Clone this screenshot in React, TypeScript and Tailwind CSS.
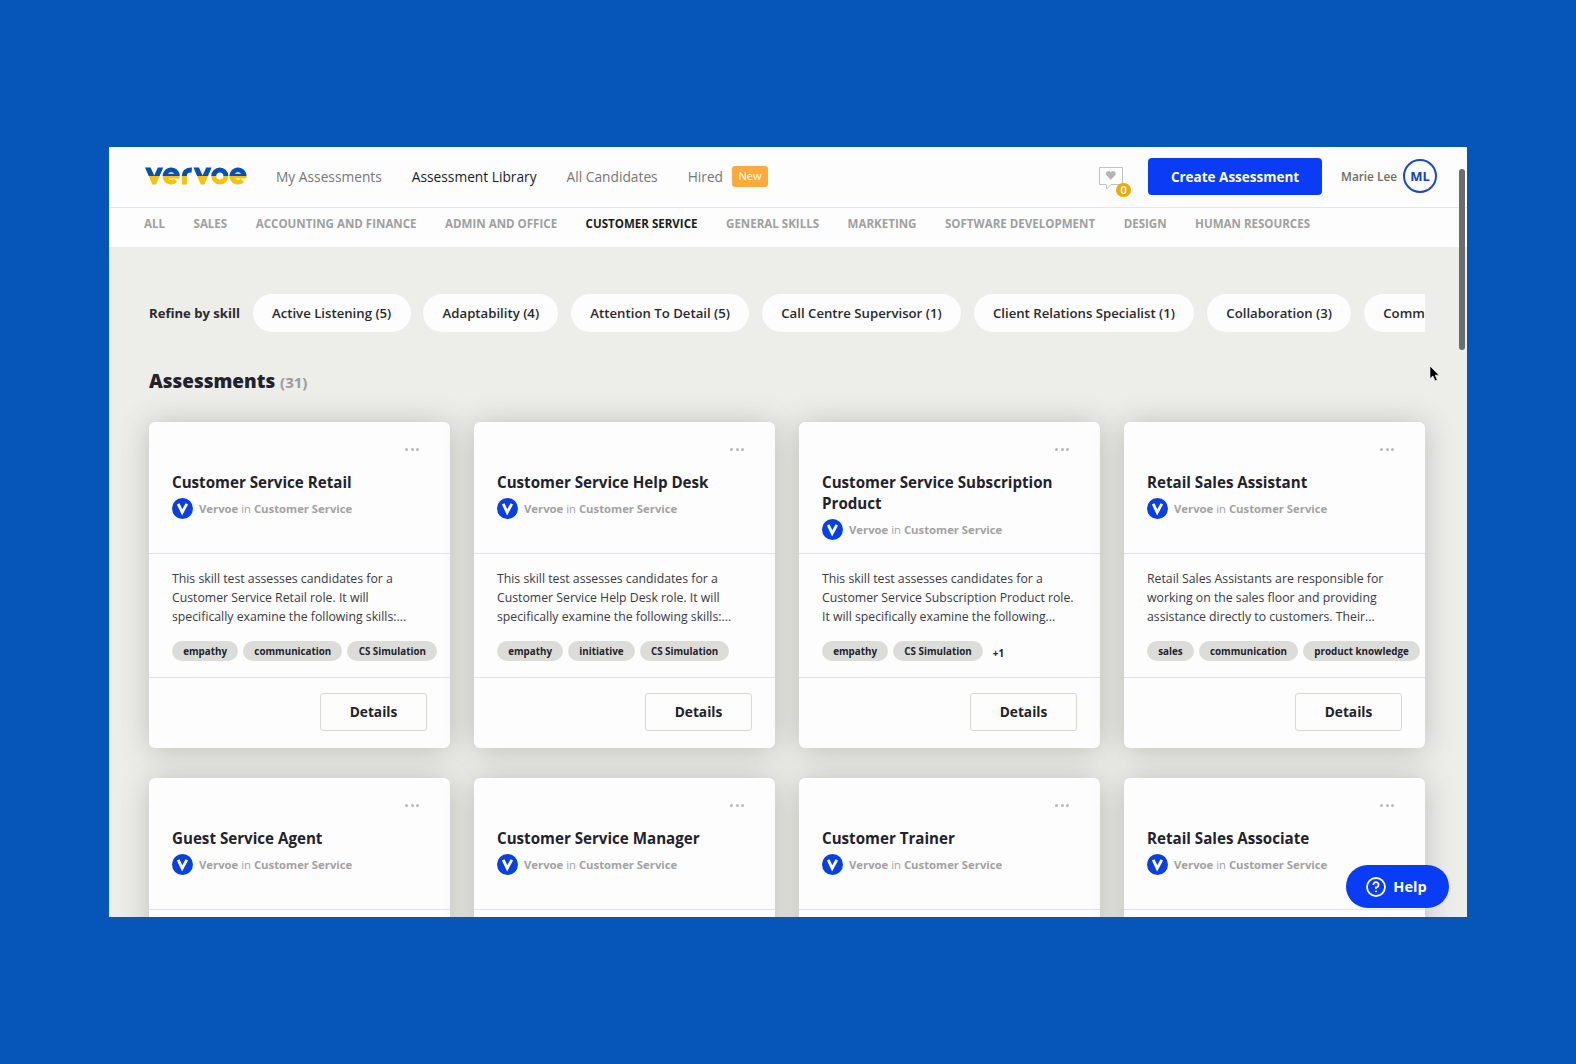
const navItems = ['My Assessments', 'Assessment Library', 'All Candidates', 'Hired'];

const categories = [
  'ALL',
  'SALES',
  'ACCOUNTING AND FINANCE',
  'ADMIN AND OFFICE',
  'CUSTOMER SERVICE',
  'GENERAL SKILLS',
  'MARKETING',
  'SOFTWARE DEVELOPMENT',
  'DESIGN',
  'HUMAN RESOURCES',
];

const skills = [
  'Active Listening (5)',
  'Adaptability (4)',
  'Attention To Detail (5)',
  'Call Centre Supervisor (1)',
  'Client Relations Specialist (1)',
  'Collaboration (3)',
];

interface Assessment {
  title: string;
  lines?: string[];
  tags?: string[];
  extra?: string;
}

const assessments: Assessment[] = [
  {
    title: 'Customer Service Retail',
    lines: ['This skill test assesses candidates for a', 'Customer Service Retail role. It will', 'specifically examine the following skills:...'],
    tags: ['empathy', 'communication', 'CS Simulation'],
  },
  {
    title: 'Customer Service Help Desk',
    lines: ['This skill test assesses candidates for a', 'Customer Service Help Desk role. It will', 'specifically examine the following skills:...'],
    tags: ['empathy', 'initiative', 'CS Simulation'],
  },
  {
    title: 'Customer Service Subscription Product',
    lines: ['This skill test assesses candidates for a', 'Customer Service Subscription Product role.', 'It will specifically examine the following...'],
    tags: ['empathy', 'CS Simulation'],
    extra: '+1',
  },
  {
    title: 'Retail Sales Assistant',
    lines: ['Retail Sales Assistants are responsible for', 'working on the sales floor and providing', 'assistance directly to customers. Their...'],
    tags: ['sales', 'communication', 'product knowledge'],
  },
  { title: 'Guest Service Agent' },
  { title: 'Customer Service Manager' },
  { title: 'Customer Trainer' },
  { title: 'Retail Sales Associate' },
];

function Logo() {
  return (
    <svg className="h-[18px] w-[102px]" viewBox="0 0 102 18" fill="none" strokeWidth="5">
      <defs>
        <linearGradient id="logo" x1="0" y1="0" x2="0" y2="18" gradientUnits="userSpaceOnUse">
          <stop offset="0.5" stopColor="#0a50b4" />
          <stop offset="0.5" stopColor="#f7c20c" />
        </linearGradient>
      </defs>
      <path d="M0 0.5H5.6L9.2 8.6L12.8 0.5H18.2L11 17.5H7.4zM48.4 0.5H54L57.6 8.6L61.2 0.5H66.6L59.4 17.5H55.8z" fill="url(#logo)" />
      <g stroke="url(#logo)">
        <path d="M20.5 9.2H32.4A6.2 6.2 0 1 0 30.6 13.4" strokeWidth="4.7" />
        <path d="M39.4 17.5V9Q39.4 2.7 46.8 3.1" />
        <circle cx="74.8" cy="9" r="6.1" />
        <path d="M87.2 9.2H99.2A6.2 6.2 0 1 0 97.4 13.4" strokeWidth="4.7" />
      </g>
    </svg>
  );
}

function Card({ item }: { item: Assessment }) {
  return (
    <div className="h-[326px] rounded-md bg-[#fdfdfd] shadow-[0_2px_30px_rgba(80,80,65,0.3)]">
      <div className="flex h-[132px] flex-col border-b border-[#e2e2ec] pr-6 pl-[23px]">
        <div className="mt-6 flex h-1.5 items-center justify-end gap-[2.5px] pr-[7px]">
          <span className="size-[3px] rounded-full bg-[#b8b8b4]" />
          <span className="size-[3px] rounded-full bg-[#b8b8b4]" />
          <span className="size-[3px] rounded-full bg-[#b8b8b4]" />
        </div>
        <h3 className="mt-5 text-[15.15px] leading-[21px] font-bold text-[#22222c]">{item.title}</h3>
        <div className="mt-[5px] flex items-center gap-1.5 text-[11.3px] leading-[21px] font-bold text-[#a2a2a2]">
          <svg className="size-[21px]" viewBox="0 0 21 21">
            <circle cx="10.5" cy="10.5" r="10.5" fill="#0b40e0" />
            <path d="M6.2 5.8L10.2 14.4L14.8 5.8" fill="none" stroke="#fff" strokeWidth="2.8" />
          </svg>
          <span>
            Vervoe <span className="font-normal">in</span> Customer Service
          </span>
        </div>
      </div>
      {item.lines && (
        <>
          <div className="h-[124px] border-b border-[#e2e2ec] pt-[15px] pl-[23px]">
            <div className="h-[57px] text-[12.28px] leading-[19px] whitespace-nowrap text-[#3a3a42]">
              {item.lines.map((line) => (
                <p key={line}>{line}</p>
              ))}
            </div>
            <div className="mt-[15px] flex gap-[5px]">
              {item.tags?.map((tag) => (
                <span key={tag} className="h-5 rounded-full bg-[#dcddd8] px-[11.2px] text-[9.8px] leading-[21px] font-bold whitespace-nowrap text-[#22222c]">
                  {tag}
                </span>
              ))}
              {item.extra && <span className="pt-[3px] pl-[5px] text-[9.8px] leading-5 font-bold text-[#22222c]">{item.extra}</span>}
            </div>
          </div>
          <div className="flex justify-end pt-[15px] pr-[23px]">
            <button className="h-[38px] w-[107px] rounded-[3px] border border-[#d8d8d2] text-[13.7px] font-bold text-[#22222c]">Details</button>
          </div>
        </>
      )}
    </div>
  );
}

export default function App() {
  return (
    <div className="flex h-[1064px] w-[1576px] bg-[#0656ba] pt-[147px] pl-[109px] font-['Open_Sans',sans-serif]">
      <div className="relative h-[770px] w-[1358px] overflow-hidden bg-[#ededea]">
        {/* Header */}
        <header className="flex h-[61px] items-center border-b border-[#e6e6ec] bg-[#fdfdfd] pr-[30px] pb-0.5 pl-[36px]">
          <Logo />
          <nav className="ml-[29px] flex items-center gap-[30px] pt-0.5 text-[13.75px] font-medium text-[#777777]">
            {navItems.map((item) => (
              <a key={item} className={item === 'Assessment Library' ? 'text-[#1c1c24]' : ''}>
                {item}
              </a>
            ))}
          </nav>
          <span className="mt-px ml-[9px] flex h-[21px] w-9 items-center justify-center rounded-[3px] bg-[#fbab3c] text-[11px] text-white">New</span>

          <div className="ml-auto flex items-center">
            <div className="relative mr-[23px] h-[26px] w-[26px]">
              <svg className="size-[26px]" viewBox="0 0 26 26" fill="none">
                <path d="M0.5 4.5h23v17H12L7.5 26V21.5H0.5z" stroke="#c2c2c2" />
                <path d="M11.8 16.8L7.4 12.2A2.5 2.5 0 0 1 11.8 9.4A2.5 2.5 0 0 1 16.2 12.2z" fill="#b5b5b5" />
              </svg>
              <span className="absolute top-5 left-[17px] flex h-3.5 w-[15px] items-center justify-center rounded-full bg-[#e6ae0c] text-[11px] font-semibold text-white">0</span>
            </div>
            <button className="h-[37px] w-[174px] rounded bg-[#0b3cf5] pt-0.5 text-[13.5px] font-bold text-white">Create Assessment</button>
            <span className="ml-[19px] pt-0.5 text-[11.8px] font-semibold text-[#6e6e60]">Marie Lee</span>
            <span className="ml-[6px] flex size-[34px] items-center justify-center rounded-full border-2 border-[#1a48c8] pt-px text-[13px] font-bold text-[#1440c8]">ML</span>
          </div>
        </header>

        {/* Categories */}
        <div className="flex h-[39px] gap-[28.5px] bg-[#fdfdfd] pt-[7px] pl-[35px] text-[11.55px] leading-[18px] font-bold whitespace-nowrap text-[#a0a0a0]">
          {categories.map((c) => (
            <a key={c} className={c === 'CUSTOMER SERVICE' ? 'text-[#1c1c1c]' : ''}>
              {c}
            </a>
          ))}
        </div>

        <main className="pr-[42px] pl-10">
          {/* Skill filters */}
          <div className="mt-[47px] flex items-center gap-[12.7px] overflow-hidden text-[13.2px] whitespace-nowrap text-[#2a2a2e]">
            <span className="pt-0.5 text-[13.1px] font-bold">Refine by skill</span>
            {skills.map((skill) => (
              <span key={skill} className="h-[38px] shrink-0 rounded-full bg-[#fdfdfd] px-[19.3px] leading-[38px] font-semibold">
                {skill}
              </span>
            ))}
            <span className="h-[38px] flex-1 rounded-l-full bg-[#fdfdfd] pl-[19.3px] leading-[38px] font-semibold">Comm</span>
          </div>

          <h2 className="mt-9 text-[18.9px] leading-[26px] font-extrabold text-[#22222c]">
            Assessments <span className="text-[15px] font-bold text-[#9b9b9b]">(31)</span>
          </h2>

          {/* Results */}
          <div className="mt-[27px] grid grid-cols-4 gap-x-6 gap-y-[30px]">
            {assessments.map((item) => (
              <Card key={item.title} item={item} />
            ))}
          </div>
        </main>

        {/* Scrollbar */}
        <div className="absolute top-0 right-0 h-full w-2">
          <div className="mt-[22px] h-[181px] w-1.5 rounded-full bg-[#6c6c6c]" />
        </div>

        <svg className="absolute top-[219px] left-[1321px] h-4 w-3" viewBox="0 0 12 16">
          <path d="M0 0V12.5L3 10L5 15L7.3 14L5.2 9.2H9z" fill="#000" stroke="#fff" strokeWidth="0.6" />
        </svg>

        <button className="absolute right-[18px] bottom-[9px] flex h-[43px] w-[103px] items-center justify-center gap-[7px] rounded-full bg-[#0b3cf5] pr-0.5 text-[14.5px] font-bold text-white">
          <svg className="size-5" viewBox="0 0 20 20" fill="none" stroke="#fff" strokeWidth="1.8">
            <circle cx="10" cy="10" r="9" />
            <path d="M7.4 8A2.6 2.6 0 1 1 10 10.4V12" />
            <circle cx="10" cy="14.4" r="0.6" fill="#fff" strokeWidth="1" />
          </svg>
          Help
        </button>
      </div>
    </div>
  );
}
